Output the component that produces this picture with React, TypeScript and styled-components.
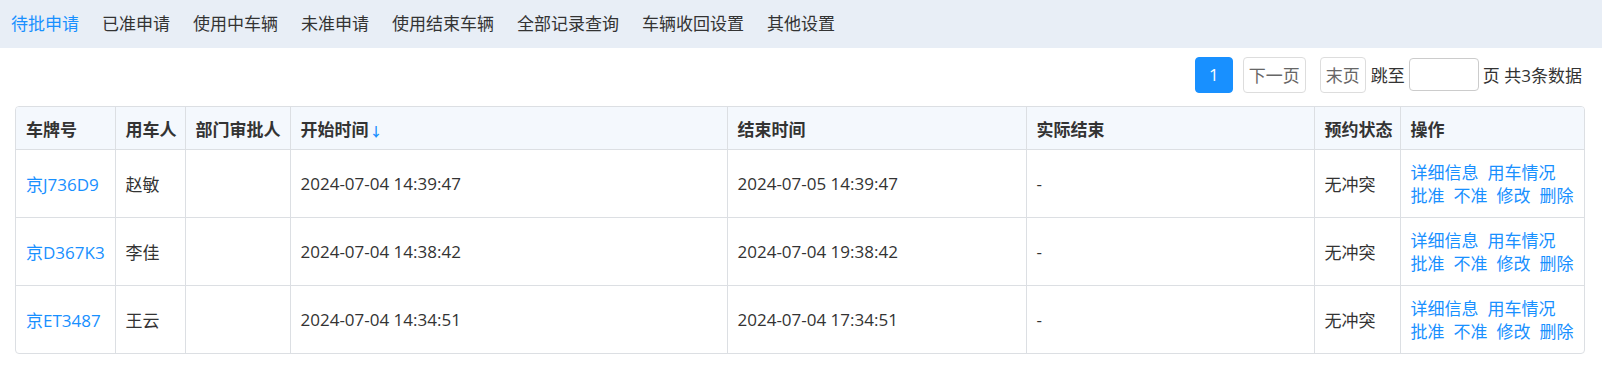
import styled, { createGlobalStyle } from "styled-components";

const GlobalStyle = createGlobalStyle`
  body {
    margin: 0;
    background: #fff;
    font-family: "Open Sans", "Noto Sans CJK SC", sans-serif;
    color: #333;
  }
`;

const BLUE = "#1890ff";
const LINE = "#dcdfe3";

const Page = styled.div`
  width: 1602px;
`;

const TabBar = styled.div`
  height: 48px;
  background: #e8eef6;
  display: flex;
  align-items: center;
  gap: 23px;
  padding-left: 11px;
`;

const Tab = styled.span<{ $active?: boolean }>`
  font-size: 17px;
  line-height: 48px;
  color: ${(p) => (p.$active ? BLUE : "#333")};
  cursor: pointer;
`;

const Body = styled.div`
  padding: 8px 17px 0 15px;
`;

const Pager = styled.div`
  display: flex;
  justify-content: flex-end;
  align-items: center;
  height: 37px;
  font-size: 17px;
  padding-right: 3px;
`;

const PageBtn = styled.button<{ $current?: boolean; $gap?: number }>`
  height: 36px;
  min-width: 38px;
  margin-left: ${(p) => p.$gap ?? 0}px;
  padding: 0 5px;
  box-sizing: border-box;
  border: 1px solid ${(p) => (p.$current ? BLUE : "#ddd")};
  border-radius: 4px;
  background: ${(p) => (p.$current ? BLUE : "#fff")};
  color: ${(p) => (p.$current ? "#fff" : "#666")};
  font-family: inherit;
  font-size: 17px;
`;

const PagerText = styled.span<{ $gap?: number }>`
  margin-left: ${(p) => p.$gap ?? 0}px;
  white-space: pre;
`;

const JumpInput = styled.input`
  width: 70px;
  height: 33px;
  box-sizing: border-box;
  margin: 0 4px 0 4px;
  border: 1px solid #ccc;
  border-radius: 4px;
`;

const TableBox = styled.div`
  margin-top: 13px;
  border: 1px solid ${LINE};
  border-radius: 4px;
  overflow: hidden;
`;

const Table = styled.table`
  width: 1568px;
  table-layout: fixed;
  border-collapse: collapse;
  font-size: 17px;
`;

const Th = styled.th`
  height: 42px;
  padding: 0 10px;
  text-align: left;
  font-weight: bold;
  background: #f4f8fd;
  border-bottom: 1px solid ${LINE};
  white-space: nowrap;
  & + & {
    border-left: 1px solid ${LINE};
  }
`;

const SortArrow = styled.span`
  color: ${BLUE};
  font-size: 13px;
  margin-left: 1px;
`;

const Row = styled.tr`
  & + & td {
    border-top: 1px solid ${LINE};
  }
`;

const Td = styled.td<{ $tight?: boolean }>`
  height: 67px;
  padding: ${(p) => (p.$tight ? "0 4px 0 10px" : "0 10px")};
  vertical-align: middle;
  white-space: nowrap;
  & + & {
    border-left: 1px solid ${LINE};
  }
`;

const Plate = styled.a`
  color: ${BLUE};
  text-decoration: none;
`;

const Actions = styled.div`
  display: flex;
  flex-wrap: wrap;
  column-gap: 9px;
  line-height: 23px;
`;

const ActionLink = styled.a`
  color: ${BLUE};
  cursor: pointer;
`;

const rows = [
  { plate: "京J736D9", user: "赵敏", start: "2024-07-04 14:39:47", end: "2024-07-05 14:39:47" },
  { plate: "京D367K3", user: "李佳", start: "2024-07-04 14:38:42", end: "2024-07-04 19:38:42" },
  { plate: "京ET3487", user: "王云", start: "2024-07-04 14:34:51", end: "2024-07-04 17:34:51" },
];

const tabs = ["待批申请", "已准申请", "使用中车辆", "未准申请", "使用结束车辆", "全部记录查询", "车辆收回设置", "其他设置"];
const widths = [99, 70, 105, 437, 299, 288, 86, 184];

export default function App() {
  return (
    <Page>
      <GlobalStyle />
      <TabBar>
        {tabs.map((t, i) => (
          <Tab key={t} $active={i === 0}>
            {t}
          </Tab>
        ))}
      </TabBar>
      <Body>
        <Pager>
          <PageBtn $current>1</PageBtn>
          <PageBtn $gap={10}>下一页</PageBtn>
          <PageBtn $gap={14}>末页</PageBtn>
          <PagerText $gap={5}>跳至</PagerText>
          <JumpInput />
          <PagerText>页 共3条数据</PagerText>
        </Pager>
        <TableBox>
          <Table>
            <colgroup>
              {widths.map((w, i) => (
                <col key={i} style={{ width: w }} />
              ))}
            </colgroup>
            <thead>
              <tr>
                <Th>车牌号</Th>
                <Th>用车人</Th>
                <Th>部门审批人</Th>
                <Th>
                  开始时间<SortArrow>↓</SortArrow>
                </Th>
                <Th>结束时间</Th>
                <Th>实际结束</Th>
                <Th>预约状态</Th>
                <Th>操作</Th>
              </tr>
            </thead>
            <tbody>
              {rows.map((r) => (
                <Row key={r.plate}>
                  <Td>
                    <Plate>{r.plate}</Plate>
                  </Td>
                  <Td>{r.user}</Td>
                  <Td></Td>
                  <Td>{r.start}</Td>
                  <Td>{r.end}</Td>
                  <Td>-</Td>
                  <Td>无冲突</Td>
                  <Td $tight>
                    <Actions>
                      <ActionLink>详细信息</ActionLink>
                      <ActionLink>用车情况</ActionLink>
                      <ActionLink>批准</ActionLink>
                      <ActionLink>不准</ActionLink>
                      <ActionLink>修改</ActionLink>
                      <ActionLink>删除</ActionLink>
                    </Actions>
                  </Td>
                </Row>
              ))}
            </tbody>
          </Table>
        </TableBox>
      </Body>
    </Page>
  );
}
